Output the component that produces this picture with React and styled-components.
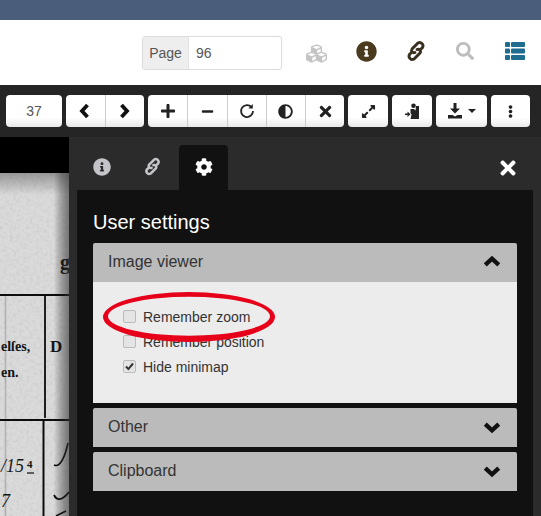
import React from "react"
import styled, { createGlobalStyle } from "styled-components"
import { FaPlus, FaMinus, FaAdjust, FaTimes, FaExpandAlt, FaEllipsisV, FaInfoCircle, FaCubes, FaSearch, FaCog } from "react-icons/fa"

const Global = createGlobalStyle`
    html, body { margin: 0; padding: 0; background: #fff; }
    body { width: 541px; height: 516px; overflow: hidden; font-family: "Liberation Sans", Arial, sans-serif; color: #333; }
    * { box-sizing: border-box; }
`;

const Page = styled.div`
    width: 541px;
    height: 516px;
    display: flex;
    flex-direction: column;
    position: relative;
    overflow: hidden;
`;

const TopStrip = styled.div`
    height: 20px;
    background: #4a5e7c;
`;

const Header = styled.div`
    height: 65px;
    background: #fff;
    display: flex;
    align-items: flex-start;
    padding: 16px 0 0 142px;
`;

const PageGroup = styled.div`
    display: flex;
    width: 140px;
    height: 34px;
    border: 1px solid #ddd;
    border-radius: 3px;
    overflow: hidden;
    font-size: 14px;
    box-shadow: 0 0 1px rgba(0,0,0,.1);
`;

const PageLabel = styled.div`
    width: 46px;
    background: #eee;
    border-right: 1px solid #e2e2e2;
    color: #555;
    display: flex;
    align-items: center;
    justify-content: center;
`;

const PageValue = styled.div`
    flex: 1;
    display: flex;
    align-items: center;
    padding-left: 7px;
    color: #555;
`;

const HeaderIcons = styled.div`
    display: flex;
    margin-left: 10px;
`;

const HeaderIcon = styled.div`
    width: 49.5px;
    height: 30px;
    display: flex;
    align-items: center;
    justify-content: center;
    font-size: 21px;
    color: ${p => p.$color};
    padding-top: ${p => p.$drop || 0}px;
`;

const Toolbar = styled.div`
    height: 52px;
    background: #252525;
    display: flex;
    padding: 10px 0 0 6px;
    gap: 4px;
`;

const Group = styled.div`
    display: flex;
    height: 32px;
    border-radius: 4px;
    overflow: hidden;
    background: linear-gradient(#fff 70%, #e9e9e9);
`;

const ToolButton = styled.div`
    width: ${p => p.$w || 39}px;
    display: flex;
    align-items: center;
    justify-content: center;
    gap: 5px;
    font-size: ${p => p.$size || 15}px;
    color: #222;
    border-left: ${p => (p.$first ? "none" : "1px solid #ccc")};
`;

const NumberBox = styled(Group)`
    width: 56px;
    font-size: 14px;
    color: #555;
    align-items: center;
    justify-content: center;
`;

const Caret = styled.span`
    width: 0;
    height: 0;
    border-left: 4px solid transparent;
    border-right: 4px solid transparent;
    border-top: 4px solid #222;
`;

const Viewer = styled.div`
    flex: 1;
    display: flex;
    min-height: 0;
`;

const ScanColumn = styled.div`
    width: 69px;
    display: flex;
    flex-direction: column;
    background: #000;
`;

const ScanTop = styled.div`
    height: 36px;
    background: #000;
`;

const Panel = styled.div`
    flex: 1;
    background: #2b2b2b;
    display: flex;
    flex-direction: column;
    padding-top: 8px;
`;

const Tabs = styled.div`
    height: 45px;
    display: flex;
    align-items: stretch;
    padding-left: 8px;
`;

const Tab = styled.div`
    width: ${p => (p.$active ? 49 : 50)}px;
    margin-left: ${p => (p.$active ? 2 : 0)}px;
    background: ${p => (p.$active ? "#111" : "transparent")};
    border-radius: 4px 4px 0 0;
    color: ${p => (p.$active ? "#fff" : "#c4c4c8")};
    font-size: 18px;
    display: flex;
    align-items: center;
    justify-content: center;
    padding-bottom: 2px;
`;

const CloseIcon = styled.div`
    margin: 0 8px 0 auto;
    width: 50px;
    display: flex;
    align-items: center;
    justify-content: center;
    color: #fff;
    font-size: 22px;
`;

const Content = styled.div`
    flex: 1;
    margin: 0 8px;
    background: #111;
    padding: 0 16px;
`;

const Title = styled.h2`
    margin: 0;
    height: 53px;
    padding-top: 20px;
    font-size: 20px;
    line-height: 24px;
    font-weight: 400;
    color: #fff;
`;

const Section = styled.div`
    margin-bottom: 5px;
`;

const SectionHead = styled.div`
    height: 39px;
    background: #bbb;
    border-radius: 2px 2px 0 0;
    display: flex;
    align-items: center;
    justify-content: space-between;
    padding: 0 16px 2px 15px;
    font-size: 16px;
    color: #333;
`;

const SectionBody = styled.div`
    height: 121px;
    background: #ececec;
    padding: 22px 0 0 30px;
`;

const CheckRow = styled.label`
    height: 25px;
    display: flex;
    align-items: center;
    gap: 7px;
    font-size: 14px;
    color: #333;
`;

const Box = styled.span`
    width: 13px;
    height: 13px;
    border: 1px solid #bbb;
    border-radius: 2px;
    background: #e4e4e4;
    display: flex;
    align-items: center;
    justify-content: center;
    color: #333;
`;

const Circle = styled.svg`
    position: absolute;
    left: 100px;
    top: 290px;
`;

const LinkIcon = ({ size = 24 }) => (
    <svg width={size} height={size} viewBox="0 0 24 24" fill="none" stroke="currentColor" strokeWidth="2.9" strokeLinecap="round">
        <path d="M16.5 10.5L18.5 8.5A3.3 3.3 0 0 0 14 4L8 10A2.4 2.4 0 0 0 11 13.5" />
        <path d="M13 10.5A2.4 2.4 0 0 1 16 14L10 20A3.3 3.3 0 0 1 5.5 15.5L7.5 13.5" />
    </svg>
);

const ListIcon = () => (
    <svg width="20" height="18" viewBox="0 0 20 18" fill="currentColor">
        <rect x="0" y="0" width="5" height="5" rx="1" />
        <rect x="6" y="0" width="14" height="5" rx="1" />
        <rect x="0" y="6.5" width="5" height="5" rx="1" />
        <rect x="6" y="6.5" width="14" height="5" rx="1" />
        <rect x="0" y="13" width="5" height="5" rx="1" />
        <rect x="6" y="13" width="14" height="5" rx="1" />
    </svg>
);

const Chevron = ({ dir, size = 16 }) => {
    const paths = {
        left: "M9.5 2L4 8l5.5 6",
        right: "M4.5 2L10 8l-5.5 6",
        up: "M2 10.5L8 5l6 5.5",
        down: "M2 5.5L8 11l6-5.5",
    };
    return (
        <svg width={size} height={size} viewBox="0 0 16 16" fill="none" stroke="#111" strokeWidth="3.8">
            <path d={paths[dir]} />
        </svg>
    );
};

const RedoIcon = () => (
    <svg width="16" height="16" viewBox="0 0 16 16" fill="none" stroke="#222" strokeWidth="1.8">
        <path d="M12.6 4.2A6 6 0 1 0 14 8" />
        <path d="M13.8 1v4.4H9.4z" fill="#222" stroke="none" />
    </svg>
);

const ReaderIcon = () => (
    <svg width="17" height="17" viewBox="0 0 17 17" fill="#222">
        <circle cx="9.5" cy="2.8" r="2.3" />
        <path d="M6.5 6h3.5l1.5 1.5L12 3h3v13H6.5l1-4.5-1-1.5z" />
        <path d="M1 10.5h2.5V8.5l3 2.7-3 2.7v-2H1z" />
    </svg>
);

const SaveIcon = () => (
    <svg width="16" height="16" viewBox="0 0 16 16" fill="#222">
        <path d="M6.5 0h3v5.5H13L8 10.5 3 5.5h3.5z" />
        <path d="M1 12h4.5l2.5 1.5 2.5-1.5H15v3.5H1z" />
    </svg>
);

const ScanPicture = () => (
    <svg width="69" height="343" viewBox="0 0 69 343">
        <defs>
            <filter id="grain">
                <feTurbulence type="fractalNoise" baseFrequency="0.3" numOctaves="3" seed="4" />
                <feColorMatrix values="0 0 0 0 0.55  0 0 0 0 0.55  0 0 0 0 0.55  0.9 0.9 0 0 -0.8" />
            </filter>
            <linearGradient id="edge" x1="0" x2="1">
                <stop offset="0.78" stopColor="#000" stopOpacity="0" />
                <stop offset="1" stopColor="#333" stopOpacity="0.6" />
            </linearGradient>
            <linearGradient id="topShade" x1="0" x2="0" y1="0" y2="1">
                <stop offset="0" stopColor="#555" stopOpacity="0.5" />
                <stop offset="1" stopColor="#555" stopOpacity="0" />
            </linearGradient>
        </defs>
        <rect width="69" height="343" fill="#dadada" />
        <rect width="69" height="343" filter="url(#grain)" />
        <rect width="69" height="22" fill="url(#topShade)" />
        <g fill="none" stroke="#0c0c0c">
            <path d="M0 122H69" strokeWidth="2" />
            <path d="M45 122V245" strokeWidth="1.8" />
            <path d="M5.5 122V343" strokeWidth="1.6" opacity=".18" />
            <path d="M0 247H69" strokeWidth="2" />
            <path d="M43.5 247V343" strokeWidth="2" />
            <path d="M54 292c6 3 11-8 14-22" strokeWidth="1.6" />
            <path d="M54 322c4 8 10 3 15-3" strokeWidth="1.8" />
            <path d="M66 338l-10 5" strokeWidth="1.6" />
            <path d="M27 300h7" strokeWidth="1.2" />
        </g>
        <g fontFamily="Liberation Serif, serif" fontWeight="700" fill="#151515">
            <text x="1" y="178" fontSize="14">elſes,</text>
            <text x="1" y="204" fontSize="14">en.</text>
            <text x="50" y="179" fontSize="17">D</text>
            <text x="60" y="96" fontSize="20">g</text>
            <text x="1" y="299" fontSize="18" fontStyle="italic" fontWeight="400">/15</text>
            <text x="27" y="295" fontSize="11">4</text>
            <text x="1" y="334" fontSize="18" fontStyle="italic" fontWeight="400">7</text>
        </g>
        <rect width="69" height="343" fill="url(#edge)" />
    </svg>
);

const settings = [
    { label: "Remember zoom", checked: false },
    { label: "Remember position", checked: false },
    { label: "Hide minimap", checked: true },
];

export default function App() {
    return (
        <Page>
            <Global />
            <TopStrip />
            <Header>
                <PageGroup>
                    <PageLabel>Page</PageLabel>
                    <PageValue>96</PageValue>
                </PageGroup>
                <HeaderIcons>
                    <HeaderIcon $color="#c4c4c4" $drop={4}><FaCubes /></HeaderIcon>
                    <HeaderIcon $color="#4b3b1e"><FaInfoCircle /></HeaderIcon>
                    <HeaderIcon $color="#3a3020"><LinkIcon /></HeaderIcon>
                    <HeaderIcon $color="#bdbdbd"><FaSearch size={18} /></HeaderIcon>
                    <HeaderIcon $color="#1f6c90"><ListIcon /></HeaderIcon>
                </HeaderIcons>
            </Header>
            <Toolbar>
                <NumberBox>37</NumberBox>
                <Group>
                    <ToolButton $first><Chevron dir="left" /></ToolButton>
                    <ToolButton><Chevron dir="right" /></ToolButton>
                </Group>
                <Group>
                    <ToolButton $first $w={39.25} $size={16}><FaPlus /></ToolButton>
                    <ToolButton $w={39.25} $size={13}><FaMinus /></ToolButton>
                    <ToolButton $w={39.25}><RedoIcon /></ToolButton>
                    <ToolButton $w={39.25}><FaAdjust /></ToolButton>
                    <ToolButton $w={39.25} $size={17}><FaTimes /></ToolButton>
                </Group>
                <Group>
                    <ToolButton $first $w={40}><FaExpandAlt /></ToolButton>
                </Group>
                <Group>
                    <ToolButton $first $w={40}><ReaderIcon /></ToolButton>
                </Group>
                <Group>
                    <ToolButton $first $w={51}><SaveIcon /><Caret /></ToolButton>
                </Group>
                <Group>
                    <ToolButton $first $size={13}><FaEllipsisV /></ToolButton>
                </Group>
            </Toolbar>
            <Viewer>
                <ScanColumn>
                    <ScanTop />
                    <ScanPicture />
                </ScanColumn>
                <Panel>
                    <Tabs>
                        <Tab><FaInfoCircle /></Tab>
                        <Tab><LinkIcon size={21} /></Tab>
                        <Tab $active><FaCog /></Tab>
                        <CloseIcon><FaTimes /></CloseIcon>
                    </Tabs>
                    <Content>
                        <Title>User settings</Title>
                        <Section>
                            <SectionHead>Image viewer <Chevron dir="up" size={18} /></SectionHead>
                            <SectionBody>
                                {settings.map((s, key) => (
                                    <CheckRow key={`setting-${key}`}>
                                        <Box>{s.checked && (
                                            <svg width="9" height="9" viewBox="0 0 9 9"><path d="M1 4.5l2.4 2.6L8 1.5" fill="none" stroke="#333" strokeWidth="2" /></svg>
                                        )}</Box>
                                        {s.label}
                                    </CheckRow>
                                ))}
                            </SectionBody>
                        </Section>
                        <Section>
                            <SectionHead>Other <Chevron dir="down" size={18} /></SectionHead>
                        </Section>
                        <Section>
                            <SectionHead>Clipboard <Chevron dir="down" size={18} /></SectionHead>
                        </Section>
                    </Content>
                </Panel>
            </Viewer>
            <Circle width="180" height="54" viewBox="0 0 180 54">
                <path fillRule="evenodd" fill="#e6001a" d="M3 27a86 25 0 1 0 172 0a86 25 0 1 0 -172 0zM8 26.2a81 19.5 0 1 0 162 0a81 19.5 0 1 0 -162 0z" />
            </Circle>
        </Page>
    )
}
